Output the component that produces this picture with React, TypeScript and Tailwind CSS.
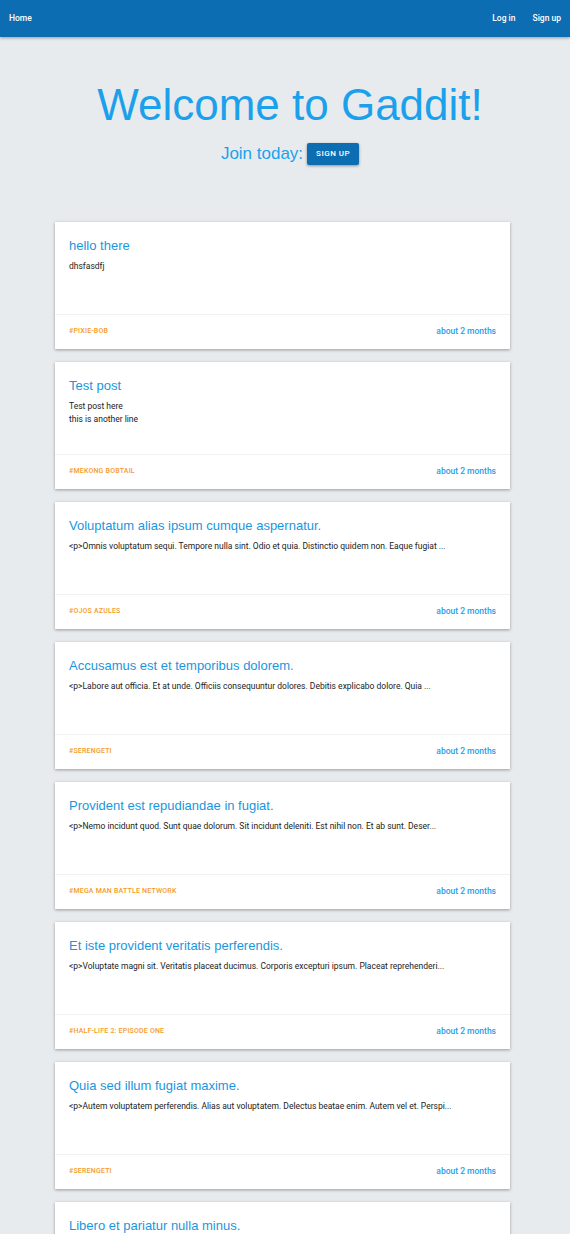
import React from "react";

const posts = [
  { title: "hello there", body: ["dhsfasdfj"], tag: "#PIXIE-BOB" },
  { title: "Test post", body: ["Test post here", "this is another line"], tag: "#MEKONG BOBTAIL" },
  {
    title: "Voluptatum alias ipsum cumque aspernatur.",
    body: ["<p>Omnis voluptatum sequi. Tempore nulla sint. Odio et quia. Distinctio quidem non. Eaque fugiat ..."],
    tag: "#OJOS AZULES",
  },
  {
    title: "Accusamus est et temporibus dolorem.",
    body: ["<p>Labore aut officia. Et at unde. Officiis consequuntur dolores. Debitis explicabo dolore. Quia ..."],
    tag: "#SERENGETI",
  },
  {
    title: "Provident est repudiandae in fugiat.",
    body: ["<p>Nemo incidunt quod. Sunt quae dolorum. Sit incidunt deleniti. Est nihil non. Et ab sunt. Deser..."],
    tag: "#MEGA MAN BATTLE NETWORK",
  },
  {
    title: "Et iste provident veritatis perferendis.",
    body: ["<p>Voluptate magni sit. Veritatis placeat ducimus. Corporis excepturi ipsum. Placeat reprehenderi..."],
    tag: "#HALF-LIFE 2: EPISODE ONE",
  },
  {
    title: "Quia sed illum fugiat maxime.",
    body: ["<p>Autem voluptatem perferendis. Alias aut voluptatem. Delectus beatae enim. Autem vel et. Perspi..."],
    tag: "#SERENGETI",
  },
  {
    title: "Libero et pariatur nulla minus.",
    body: ["<p>Quo et dolor. Sunt ipsa sit. Aut non est. Molestiae et aut. Voluptas quia ..."],
    tag: "#SERENGETI",
  },
];

export default function App() {
  return (
    <div className="h-[1234px] overflow-hidden bg-[#e8ebee] font-['Roboto',sans-serif]">
      {/* header */}
      <header className="h-[37px] bg-[#0d6db3] flex items-center justify-between px-[9px] shadow-[0_1px_3px_rgba(0,0,0,0.35)]">
        <span className="text-white text-[8.5px] font-medium">Home</span>
        <nav className="flex items-center gap-[17px] text-white text-[8.5px] font-medium">
          <span>Log in</span>
          <span>Sign up</span>
        </nav>
      </header>

      {/* hero */}
      <div className="flex flex-col items-center pt-[43px] pl-[10px] font-['Liberation_Sans',sans-serif]">
        <h1 className="text-[44px] leading-[50px] text-[#1ba1ec]">Welcome to Gaddit!</h1>
        <div className="flex items-center gap-[4px] mt-[11px]">
          <span className="text-[17px] text-[#1ba1ec]">Join today:</span>
          <button className="h-[22px] w-[52px] bg-[#0d6db3] text-white text-[8px] font-medium tracking-[0.5px] rounded-[2px] shadow-[0_1px_3px_rgba(0,0,0,0.4)] font-['Roboto',sans-serif]">
            SIGN UP
          </button>
        </div>
      </div>

      {/* posts */}
      <div className="flex flex-col gap-[13px] ml-[55px] w-[455px] mt-[55px]">
        {posts.map((p, i) => (
          <div key={i} className="bg-white h-[127px] shrink-0 flex flex-col shadow-[0_1px_3px_rgba(0,0,0,0.35)]">
            <div className="h-[93px] px-[14px] pt-[15px] border-b border-[#f1f1f1]">
              <h2 className="text-[13px] leading-[18px] text-[#1a96dd] font-['Liberation_Sans',sans-serif]">{p.title}</h2>
              <div className="mt-[5px] text-[8.5px] leading-[13px] text-[#222]">
                {p.body.map((b, j) => (
                  <div key={j}>{b}</div>
                ))}
              </div>
            </div>
            <div className="flex-1 flex items-center justify-between px-[14px]">
              <span className="text-[7px] font-medium text-[#f59b2b] tracking-[0.2px]">{p.tag}</span>
              <span className="text-[8.5px] font-medium text-[#1ba1ec]">about 2 months</span>
            </div>
          </div>
        ))}
      </div>
    </div>
  );
}
